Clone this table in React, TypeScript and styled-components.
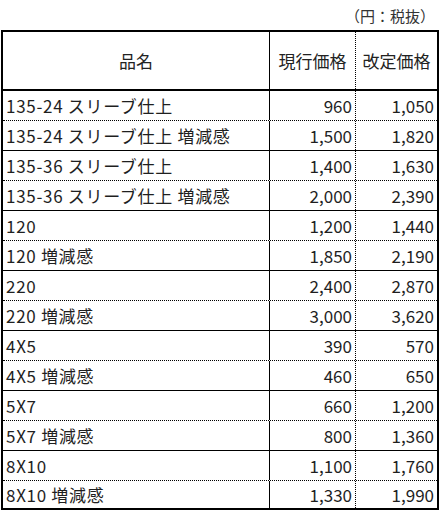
import { createGlobalStyle, styled } from "styled-components"

const GlobalStyle = createGlobalStyle`
  html, body {
    margin: 0;
    padding: 0;
    background: #ffffff;
  }
  body {
    font-family: "Noto Sans CJK JP", "Noto Sans", sans-serif;
    color: #1f1f1f;
  }
`

const Page = styled.div`
  width: 443px;
  padding-left: 1px;
  box-sizing: border-box;
`

const Unit = styled.div`
  height: 30px;
  box-sizing: border-box;
  padding: 5px 8px 0 0;
  text-align: right;
  font-size: 15px;
  line-height: 22px;
  color: #333;
`

const Table = styled.div`
  width: 438px;
  box-sizing: border-box;
  border: 2px solid #000;
  font-size: 17px;
`

type Line = "solid" | "dotted" | "none"

const Row = styled.div<{ $line: Line; $height: number; $thick?: boolean }>`
  display: grid;
  grid-template-columns: 266px 86px 1fr;
  height: ${({ $height }) => $height}px;
  box-sizing: border-box;
  border-bottom: ${({ $line, $thick }) =>
    $line === "none" ? "none" : `${$thick ? 2 : 1}px ${$line} #000`};
`

const HeadCell = styled.div<{ $divider?: "solid" | "dotted" }>`
  display: flex;
  align-items: center;
  justify-content: center;
  color: #222;
  border-left: ${({ $divider }) => ($divider ? `1px ${$divider} #000` : "none")};
`

const NameCell = styled.div`
  display: flex;
  align-items: center;
  padding-left: 3px;
  white-space: nowrap;
  letter-spacing: 0.7px;
`

const PriceCell = styled.div<{ $divider: "solid" | "dotted" }>`
  display: flex;
  align-items: center;
  justify-content: flex-end;
  padding-right: 3px;
  border-left: 1px ${({ $divider }) => $divider} #000;
`

const rows: [string, string, string][] = [
  ["135-24 スリーブ仕上", "960", "1,050"],
  ["135-24 スリーブ仕上 増減感", "1,500", "1,820"],
  ["135-36 スリーブ仕上", "1,400", "1,630"],
  ["135-36 スリーブ仕上 増減感", "2,000", "2,390"],
  ["120", "1,200", "1,440"],
  ["120 増減感", "1,850", "2,190"],
  ["220", "2,400", "2,870"],
  ["220 増減感", "3,000", "3,620"],
  ["4X5", "390", "570"],
  ["4X5 増減感", "460", "650"],
  ["5X7", "660", "1,200"],
  ["5X7 増減感", "800", "1,360"],
  ["8X10", "1,100", "1,760"],
  ["8X10 増減感", "1,330", "1,990"],
]

export default function App() {
  return (
    <>
      <GlobalStyle />
      <Page>
        <Unit>（円：税抜）</Unit>
        <Table>
          <Row $height={59} $line="solid" $thick>
            <HeadCell>品名</HeadCell>
            <HeadCell $divider="solid">現行価格</HeadCell>
            <HeadCell $divider="dotted">改定価格</HeadCell>
          </Row>
          {rows.map(([name, now, next], i) => {
            const last = i === rows.length - 1
            return (
              <Row
                key={name}
                $height={last ? 27 : 30}
                $line={last ? "none" : i % 2 === 0 ? "dotted" : "solid"}
              >
                <NameCell>{name}</NameCell>
                <PriceCell $divider="solid">{now}</PriceCell>
                <PriceCell $divider="dotted">{next}</PriceCell>
              </Row>
            )
          })}
        </Table>
      </Page>
    </>
  )
}
